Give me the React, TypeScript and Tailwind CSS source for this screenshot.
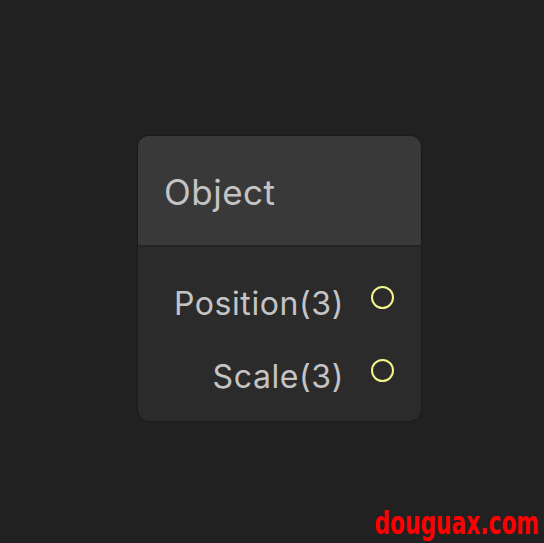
import React from "react";

type Port = { label: string };

const ports: Port[] = [{ label: "Position(3)" }, { label: "Scale(3)" }];

function PortRow({ label }: Port) {
  return (
    <div className="flex h-[73px] items-center justify-end">
      <span className="mt-[13px] text-[32px] leading-none tracking-[0.6px] text-[#c4c4c4]">{label}</span>
      <span className="ml-[27px] mr-[27px] h-[23px] w-[23px] rounded-full border-2 border-[#f4f48c] bg-[#2b2b2b]" />
    </div>
  );
}

export default function App() {
  return (
    <div
      className="relative h-[543px] w-[544px] overflow-hidden bg-[#212121] pl-[137px] pt-[135px]"
      style={{ fontFamily: "Inter, 'Noto Sans', sans-serif" }}
    >
      <div className="w-[285px] overflow-hidden rounded-[12px] border border-[#1a1a1a] bg-[#2b2b2b]">
        {/* header */}
        <div className="flex h-[111px] items-center border-b-2 border-[#242424] bg-[#393939] px-[26px]">
          <span className="mt-[3px] text-[35px] leading-none tracking-[0.5px] text-[#c4c4c4]">Object</span>
        </div>
        {/* ports */}
        <div className="flex flex-col pt-[14px] pb-[14px]">
          {ports.map((p) => (
            <PortRow key={p.label} label={p.label} />
          ))}
        </div>
      </div>

      <div
        className="absolute bottom-[4px] right-[5px] origin-right scale-x-[0.68] text-[32px] font-bold leading-none text-[#ff0000]"
        style={{ fontFamily: "'DejaVu Sans', sans-serif" }}
      >
        douguax.com
      </div>
    </div>
  );
}
